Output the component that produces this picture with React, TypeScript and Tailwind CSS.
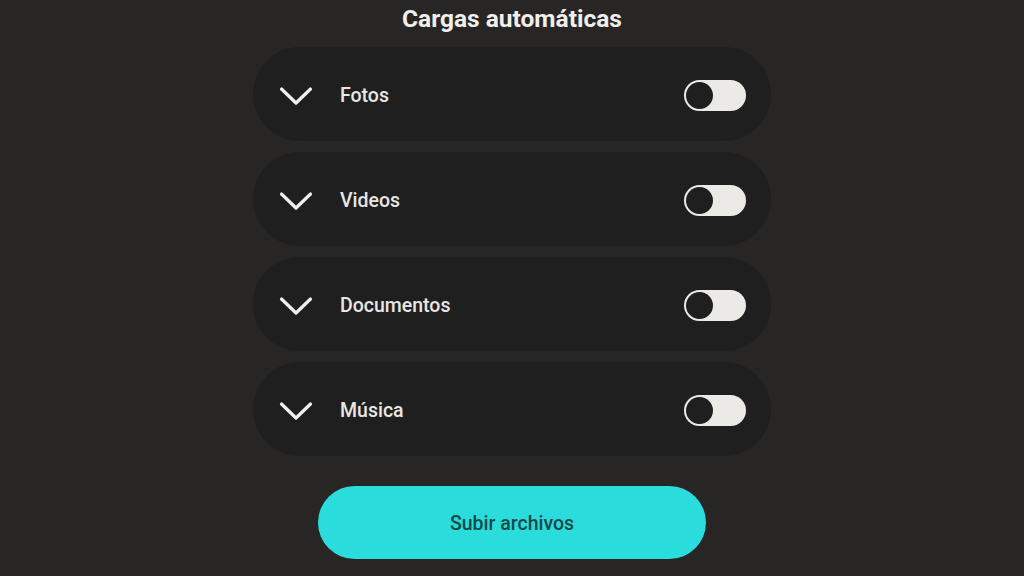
import React from 'react';

const items = ['Fotos', 'Videos', 'Documentos', 'Música'];

const Chevron = () => (
  <svg width="34" height="20" viewBox="0 0 34 20" fill="none">
    <path d="M2.5 3 L17 17 L31.5 3" stroke="#f2f0ec" strokeWidth="3.2" strokeLinecap="round" strokeLinejoin="round" />
  </svg>
);

const Toggle = () => (
  <div className="w-[62px] h-[31px] rounded-full bg-[#eceae6] flex items-center p-[2px]">
    <div className="w-[27px] h-[27px] rounded-full bg-[#1f1f1f]" />
  </div>
);

export default function App() {
  return (
    <div
      className="w-[1024px] h-[576px] bg-[#282624] flex flex-col items-center pt-[4px]"
      style={{ fontFamily: 'Roboto, "Liberation Sans", sans-serif' }}
    >
      <h1 className="text-[24.5px] leading-[30px] font-bold text-[#f0efec] mb-[13px]">Cargas automáticas</h1>
      <div className="flex flex-col gap-[11px]">
        {items.map((label) => (
          <div key={label} className="w-[518px] h-[94px] rounded-full bg-[#1f1f1f] flex items-center pl-[26px] pr-[25px] pt-[3px]">
            <Chevron />
            <span className="ml-[27px] text-[19.5px] font-medium text-[#e8e7e4]">{label}</span>
            <div className="ml-auto">
              <Toggle />
            </div>
          </div>
        ))}
      </div>
      <button className="mt-[30px] w-[388px] h-[73px] rounded-full bg-[#2adcdc] text-[19.5px] font-medium text-[#164848] pt-[2px]">
        Subir archivos
      </button>
    </div>
  );
}
